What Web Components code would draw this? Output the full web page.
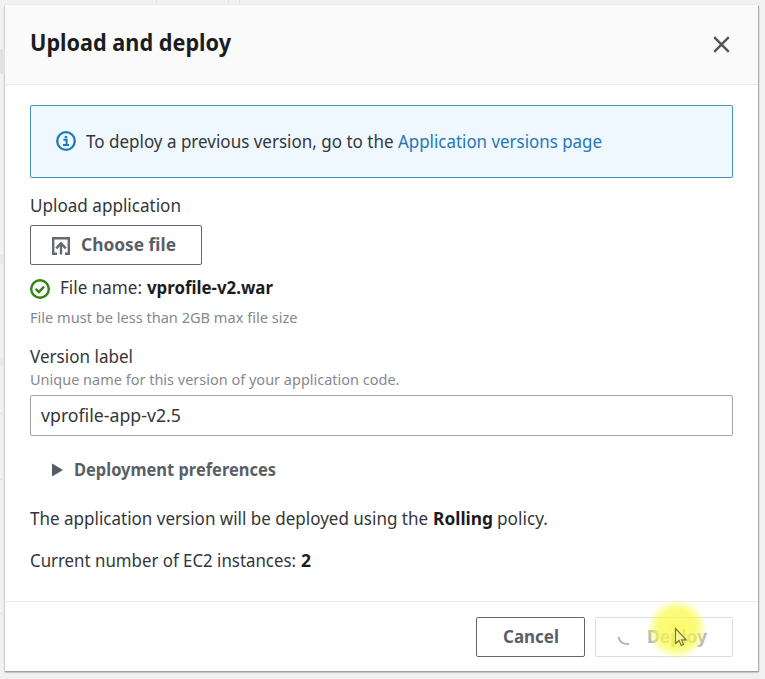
<!DOCTYPE html>
<html lang="en">
<head>
<meta charset="utf-8">
<title>Upload and deploy</title>
<style>
html,body{margin:0;height:100%}
body{background:#f1f1f1;font:17.8px/24px "Noto Sans","Open Sans",sans-serif;color:#34363a;overflow:hidden}
</style>
</head>
<body>
<deploy-page></deploy-page>
<script>
const define = (name, html, after) => customElements.define(name, class extends HTMLElement {
  constructor() {
    super();
    this.attachShadow({mode: 'open'}).innerHTML = html;
  }
  connectedCallback() { if (after) after(this, this.shadowRoot); }
});

// A run of text condensed to the width given in its "w" attribute.
define('text-run', `<style>
:host{display:inline-block;white-space:nowrap;flex:none}
span{display:inline-block;transform-origin:0 50%}
:host([bold]){font-weight:700}
</style><span><slot></slot></span>`, (host, root) => {
  const span = root.querySelector('span');
  const w = parseFloat(host.getAttribute('w'));
  const natural = span.getBoundingClientRect().width;
  span.style.transform = `scaleX(${w / natural})`;
  host.style.width = w + 'px';
});

const icons = {
  close: [17, '<path d="M1.2 1.2 15.8 15.8M15.8 1.2 1.2 15.8" stroke="#545454" stroke-width="2.4"/>'],
  info: [20, '<circle cx="10" cy="10" r="8.8" stroke="#1f7bb8" stroke-width="2.3"/><path d="M7.4 8.7h3.2v5M7 14.1h6" stroke="#1f7bb8" stroke-width="2"/><path d="M8.7 4.9h2.5v2.3H8.7z" fill="#1f7bb8"/>'],
  upload: [18, '<path d="M5 16.7H1.2V1.2h15.6v15.5H13M9 17.5V7M4.2 11.3 9 6.3l4.8 5" stroke="#656a70" stroke-width="2.4"/>'],
  check: [20, '<circle cx="10" cy="10" r="8.8" stroke="#2f8415" stroke-width="2.4"/><path d="M5.6 9.8 8.9 13l5.2-5.4" stroke="#2f8415" stroke-width="2.4"/>'],
  caret: [14, '<path d="M1 .5 12 7 1 13.5z" fill="#545b64"/>'],
  spinner: [14, '<path d="M1.6 3.8C1.9 8.3 5.6 11.2 12 11" stroke="#b3b6b8" stroke-width="2"/>']
};
define('ui-icon', `<style>:host{display:block;flex:none}svg{display:block}</style><div></div>`, (host, root) => {
  const [size, body] = icons[host.getAttribute('name')];
  root.querySelector('div').innerHTML = `<svg width="${size}" height="${size}" viewBox="0 0 ${size} ${size}" fill="none">${body}</svg>`;
});

define('ui-button', `<style>
:host{display:inline-flex;box-sizing:border-box;height:40px;align-items:center;padding-bottom:2px;border:1px solid #62676d;border-radius:2px;background:#fff;color:#5a5f66;font-weight:700;flex:none}
:host([disabled]){border-color:#dcdfe0;color:#b0b5b7}
</style><slot></slot>`);

define('info-alert', `<style>
:host{display:flex;box-sizing:border-box;height:73px;align-items:center;gap:10px;padding:0 0 1px 25px;border:1px solid #4a90bd;border-radius:2px;background:#f0f8ff}
.t{display:flex}
</style><ui-icon name="info"></ui-icon><div class="t"><slot></slot></div>`);

define('text-field', `<style>
:host{display:flex;box-sizing:border-box;height:41px;align-items:center;padding:0 0 1px 10px;border:1px solid #a0a6a6;border-radius:2px;background:#fff}
</style><slot></slot>`);

define('modal-dialog', `<style>
:host{display:flex;flex-direction:column;box-sizing:border-box;width:753px;height:666px;background:#fff;box-shadow:0 1px 2px #a0a0a0,0 1px 1px #a4a4a4,1px 1px 1px #b8b8b8}
header{box-sizing:border-box;height:80px;background:#fafafa;border-bottom:1px solid #e9e9e9;display:flex;justify-content:space-between;align-items:center;padding:0 28px 4px 25px;font-size:22.6px;line-height:30px;color:#1b1d20}
main{flex:1;padding:20px 25px 0}
footer{box-sizing:border-box;height:70px;border-top:1px solid #e9e9e9;display:flex;justify-content:flex-end;gap:10px;padding:15px 25px 0}
ui-icon{margin-top:4px}
</style>
<header><slot name="title"></slot><ui-icon name="close"></ui-icon></header>
<main><slot></slot></main>
<footer><slot name="actions"></slot></footer>`);

// Translucent click highlight with the pointer over it.
define('click-pointer', `<style>
:host{position:absolute;left:647px;top:599px;width:60px;height:60px;pointer-events:none}
i{position:absolute;inset:0;border-radius:50%;background:radial-gradient(closest-side,rgba(250,250,70,.8) 0,rgba(250,250,80,.74) 66%,rgba(250,250,100,.4) 84%,rgba(250,250,120,0) 100%)}
svg{position:absolute;left:27px;top:28px}
</style><i></i><svg width="16" height="21" viewBox="0 0 16 21"><path d="M1.5 1.5v15l3.5-3 2.3 5 2.2-1-2-4.6h4.8z" fill="#f8f7a8" fill-opacity=".75" stroke="#77732e" stroke-width="1.1"/></svg>`);

define('deploy-page', `<style>
:host{display:block;box-sizing:border-box;height:100vh;padding:5px;position:relative;overflow:hidden}
.row{display:flex;height:24px;align-items:center}
.small{font-size:15px;line-height:20px;height:20px;color:#85898d}
.gray{color:#5a5f66}
.dark{color:#1b1d20}
.ghost{position:absolute;background:#e1e2e3}
</style>
<div class="ghost" style="left:0;top:49px;width:5px;height:25px"></div>
<div class="ghost" style="left:0;top:255px;width:4px;height:9px;opacity:.5"></div>
<div class="ghost" style="left:0;top:357px;width:4px;height:9px;opacity:.5"></div>
<div class="ghost" style="left:0;top:413px;width:5px;height:1px"></div>
<div class="ghost" style="left:0;top:479px;width:5px;height:1px"></div>
<div class="ghost" style="left:0;top:613px;width:5px;height:1px"></div>
<div class="ghost" style="left:156px;top:0;width:1px;height:4px"></div>
<div class="ghost" style="left:228px;top:0;width:1px;height:4px"></div>
<div class="ghost" style="left:239px;top:0;width:1px;height:4px"></div>
<modal-dialog>
  <text-run slot="title" bold w="201">Upload and deploy</text-run>
  <info-alert><text-run w="312">To deploy a previous version, go to the&nbsp;</text-run><text-run style="color:#2577b5" w="204">Application versions page</text-run></info-alert>
  <div class="row" style="margin-top:15px"><text-run w="151">Upload application</text-run></div>
  <ui-button style="width:172px;padding-left:21px;gap:11px;margin-top:8px;vertical-align:top"><ui-icon name="upload" style="margin-top:3px"></ui-icon><text-run w="95">Choose file</text-run></ui-button>
  <div class="row" style="margin-top:10px"><ui-icon name="check" style="margin-top:4px"></ui-icon><text-run style="margin-left:10px" w="82">File name:</text-run><text-run class="dark" style="margin-left:5px" bold w="126">vprofile-v2.war</text-run></div>
  <div class="row small" style="margin-top:8px"><text-run w="267.5">File must be less than 2GB max file size</text-run></div>
  <div class="row" style="margin-top:17px"><text-run w="103">Version label</text-run></div>
  <div class="row small" style="margin-top:1px"><text-run w="369.5">Unique name for this version of your application code.</text-run></div>
  <text-field style="margin-top:6px"><text-run w="140">vprofile-app-v2.5</text-run></text-field>
  <div class="row gray" style="margin-top:21px;padding-left:21px"><ui-icon name="caret" style="margin-top:2px"></ui-icon><text-run style="margin-left:9px" bold w="202">Deployment preferences</text-run></div>
  <div class="row" style="margin-top:25px"><text-run w="402.5">The application version will be deployed using the&nbsp;</text-run><text-run class="dark" bold w="60">Rolling</text-run><text-run style="margin-left:4px" w="51">policy.</text-run></div>
  <div class="row" style="margin-top:18px"><text-run w="266">Current number of EC2 instances:</text-run><text-run class="dark" style="margin-left:5px" bold w="10">2</text-run></div>
  <ui-button slot="actions" style="width:109px;justify-content:center"><text-run w="56" style="margin-left:1px">Cancel</text-run></ui-button>
  <ui-button slot="actions" disabled style="width:138px;padding-left:21px"><ui-icon name="spinner" style="margin-top:7px"></ui-icon><text-run style="margin-left:16px" w="60">Deploy</text-run></ui-button>
</modal-dialog>
<click-pointer></click-pointer>`);
</script>
</body>
</html>
